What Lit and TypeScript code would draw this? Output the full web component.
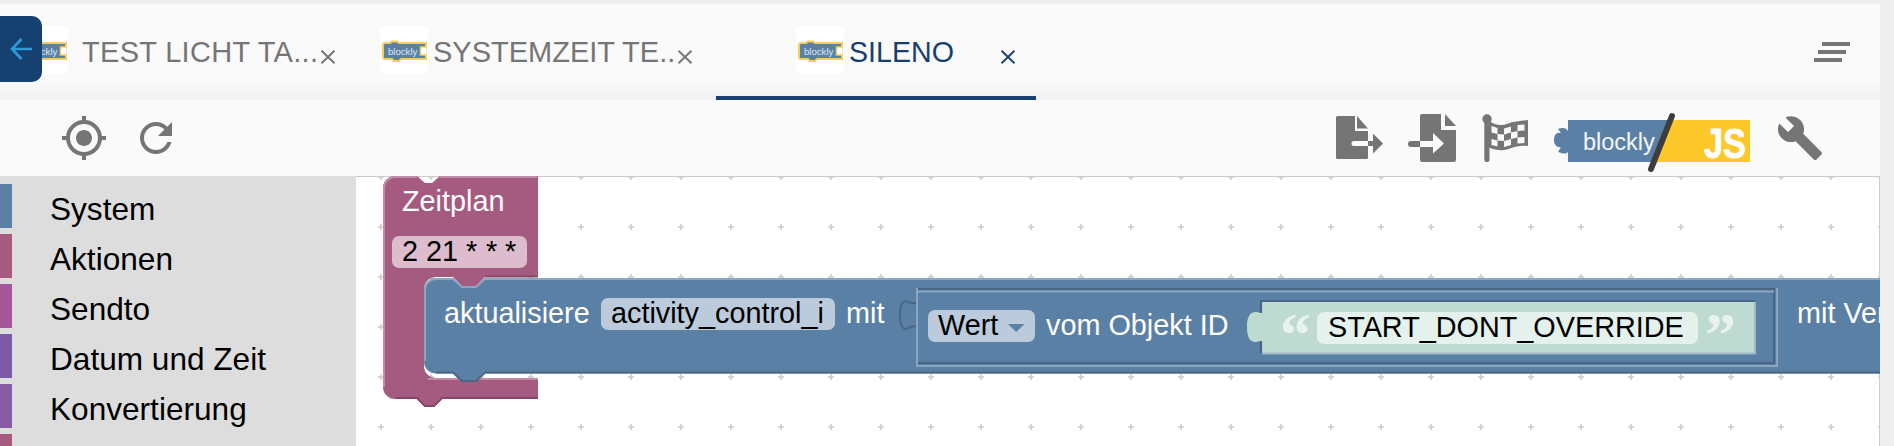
import { LitElement, html, css, svg } from "lit";
import { customElement } from "lit/decorators.js";

const miniLogo = () => svg`<svg class="mini" viewBox="0 0 48 48" width="48" height="48">
  <path d="M5 17 H10 L12 15.5 H17 L19 17 H46 V33 H21 L19 35 H14 L12 33 H5 Q3 33 3 31 V19 Q3 17 5 17 Z" fill="#5b80a5" stroke="#f5cd5e" stroke-width="2"/>
  <path d="M46.5 21 H40.5 V29 H46.5" fill="#fff" stroke="#f5cd5e" stroke-width="1.5"/>
  <text x="8" y="28.5" font-family="Liberation Sans" font-size="9.6" fill="#dfe7ef">blockly</text>
</svg>`;

const closeIcon = () => svg`<svg class="x" viewBox="0 0 16 14" width="16" height="14"><path d="M1.5 .8 L14.5 13.2 M14.5 .8 L1.5 13.2" fill="none" stroke="currentColor" stroke-width="1.9"/></svg>`;

@customElement("app-root")
export class AppRoot extends LitElement {
  static styles = css`
    :host { display: block; width: 1894px; height: 446px; overflow: hidden; background: #eeeeee; font-family: "Liberation Sans", Arial, sans-serif; }
    .frame { padding: 4px 14px 0 0; position: relative; height: 442px; }
    .tabs { display: flex; height: 96px; background: linear-gradient(#fafafa 78%, #f1f1f1); position: relative; }
    .back { position: absolute; left: 0; top: 12px; width: 42px; height: 66px; background: #15406f; border-radius: 0 10px 10px 0; z-index: 2; display: flex; align-items: center; justify-content: center; }
    .tab { display: flex; align-items: flex-start; box-sizing: border-box; height: 96px; color: #757575; font-size: 29px; }
    .t1 { width: 360px; padding-left: 20px; }
    .t2 { width: 356px; padding-left: 20px; }
    .t3 { width: 320px; padding-left: 80px; color: #15406f; border-bottom: 4px solid #15406f; font-size: 28.6px; }
    .box { width: 48px; height: 48px; margin-top: 22px; background: #fff; border-radius: 6px; flex: none; }
    .mini { display: block; }
    .label { line-height: 40px; margin-top: 28px; margin-left: 5px; white-space: nowrap; }
    .t1 .label { margin-left: 14px; letter-spacing: .3px; }
    .x { margin-top: 46px; margin-left: 2px; flex: none; }
    .t3 .x { margin-left: 46px; }
    .menu { position: absolute; left: 1814px; top: 38px; display: flex; flex-direction: column; gap: 4px; }
    .menu i { display: block; width: 28px; height: 4px; background: #757575; }
    .menu i:nth-child(1) { margin-left: 8px; }
    .menu i:nth-child(2) { margin-left: 4px; }
    .toolbar { display: flex; gap: 24px; height: 76px; box-sizing: border-box; padding: 14px 56px 0 60px; background: #fafafa; }
    .toolbar svg { display: block; flex: none; fill: #757575; }
    .spacer { flex: 1; }
    .main { display: flex; height: 270px; }
    .side { width: 356px; flex: none; background: #dddddd; padding-top: 8px; box-sizing: border-box; overflow: hidden; }
    .row { display: flex; height: 44px; margin-bottom: 6px; align-items: center; font-size: 31.6px; color: #000; }
    .row i { display: block; width: 12px; height: 44px; margin-right: 39px; flex: none; }
    .row span { position: relative; top: 3px; left: -1px; }
    .canvas { display: block; width: 1524px; height: 270px; flex: none; background: #fff; }
    .w { fill: #fff; font-size: 28.8px; font-family: "Liberation Sans", Arial, sans-serif; }
    .b { fill: #000; font-size: 28.8px; font-family: "Liberation Sans", Arial, sans-serif; }
    .q { fill: #e8f3ef; font-size: 62px; font-weight: bold; font-family: "Liberation Serif", serif; }
  `;

  private tab(cls: string, label: string) {
    return html`<div class="tab ${cls}"><div class="box">${miniLogo()}</div><div class="label">${label}</div>${closeIcon()}</div>`;
  }

  render() {
    const cats: [string, string][] = [
      ["System", "#5b80a5"], ["Aktionen", "#a55b80"], ["Sendto", "#a5559b"],
      ["Datum und Zeit", "#7d5ba5"], ["Konvertierung", "#8a5ba5"], ["", "#a55b80"],
    ];
    return html`<div class="frame">
      <div class="tabs">
        <div class="back"><svg width="22" height="22" viewBox="0 0 22 22"><path d="M22 11 H2.5 M11.5 1 L2 11 L11.5 21" fill="none" stroke="#2f9bd6" stroke-width="2.6"/></svg></div>
        ${this.tab("t1", "TEST LICHT TA...")}
        ${this.tab("t2", "SYSTEMZEIT TE..")}
        ${this.tab("t3", "SILENO")}
        <div class="menu"><i></i><i></i><i></i></div>
      </div>
      <div class="toolbar">
        <svg width="48" height="48" viewBox="0 0 24 24"><path d="M12 8c-2.21 0-4 1.79-4 4s1.79 4 4 4 4-1.79 4-4-1.79-4-4-4zm8.94 3c-.46-4.17-3.77-7.48-7.94-7.94V1h-2v2.06C6.83 3.52 3.52 6.83 3.06 11H1v2h2.06c.46 4.17 3.77 7.48 7.94 7.94V23h2v-2.06c4.17-.46 7.48-3.77 7.94-7.94H23v-2h-2.06zM12 19c-3.87 0-7-3.13-7-7s3.13-7 7-7 7 3.13 7 7-3.13 7-7 7z"/></svg>
        <svg width="48" height="48" viewBox="0 0 24 24"><path d="M17.65 6.35C16.2 4.9 14.21 4 12 4c-4.42 0-7.99 3.58-7.99 8s3.57 8 7.99 8c3.73 0 6.84-2.55 7.73-6h-2.08c-.82 2.33-3.04 4-5.65 4-3.31 0-6-2.69-6-6s2.69-6 6-6c1.66 0 3.14.69 4.22 1.78L13 11h7V4l-2.35 2.35z"/></svg>
        <div class="spacer"></div>
        <svg width="48" height="48" viewBox="0 0 48 48">
          <path d="M1.5 2 H19 V17 H32 V27 H18 a2.5 2.5 0 0 0 0 5 H32 V43.5 a1.5 1.5 0 0 1 -1.5 1.5 H1.5 A1.5 1.5 0 0 1 0 43.5 V3.5 A1.5 1.5 0 0 1 1.5 2 Z"/>
          <path d="M21 2 L32 14.5 H21 Z"/>
          <path d="M32 27 H37 V19.5 L47 29.5 L37 39.5 V32 H32 Z"/>
        </svg>
        <svg width="48" height="48" viewBox="0 0 48 48">
          <path d="M14 0 H33 V16 H48 V45.5 A2.5 2.5 0 0 1 45.5 48 H14.5 A2.5 2.5 0 0 1 12 45.5 V33 H25 V39.5 L36 29.5 L25 19 V27 H12 V2 A2 2 0 0 1 14 0 Z"/>
          <path d="M37 0 L48 12 H37 Z"/>
          <path d="M12 27 H3 a3 3 0 0 0 0 6 H12 Z"/>
        </svg>
        <svg width="48" height="48" viewBox="0 0 48 48">
          <circle cx="7" cy="5" r="4.7"/>
          <rect x="4.3" y="5" width="5.2" height="43" rx="2.2"/>
          <path d="M9 7 C15 11 21 12 27 10 C34 7 41 7 48 6 V32 C41 31 34 33 27 35.5 C21 37 15 36 9 33.5 Z"/>
          <g fill="#fafafa">
            <path d="M11.5 12 L17.5 14 V20 L11.5 18.5 Z"/><path d="M24 14.5 L31 12.5 V18.5 L24 20.5 Z"/><path d="M37.5 11 L44.5 10.5 V16.5 L37.5 17 Z"/>
            <path d="M17.5 20 L24 20.5 V27 L17.5 26.5 Z"/><path d="M31 18.5 L37.5 17 V23.5 L31 25 Z"/>
            <path d="M11.5 25 L17.5 26.5 V32.5 L11.5 31 Z"/><path d="M24 27 L31 25 V31 L24 33 Z"/><path d="M37.5 23.5 L44.5 23 V29 L37.5 29.5 Z"/>
          </g>
        </svg>
        <svg width="200" height="62" viewBox="1552 110 200 62" style="overflow:visible">
          <path d="M1568 116 H1671 L1652 158 H1568 V148 C1565 151 1562 149 1558 148 L1561 143 C1558 144 1554 141 1554 137 C1554 131 1556 128 1561 129 L1558 125 C1562 124 1565 123 1568 127 Z" fill="#5b80a5"/>
          <path d="M1671 116 H1750 V158 H1652 Z" fill="#fdc829"/>
          <text x="1583" y="146" font-family="Liberation Sans" font-size="23.5" fill="#f2f6fa">blockly</text>
          <text x="1704" y="154" font-family="Liberation Sans" font-weight="bold" font-size="42" fill="#fff" stroke="#fff" stroke-width=".8" textLength="42" lengthAdjust="spacingAndGlyphs">JS</text>
          <path d="M1672 112 L1651 165" stroke="#3d3d3d" stroke-width="6" stroke-linecap="round" fill="none"/>
        </svg>
        <svg width="48" height="48" viewBox="0 0 24 24"><path d="M22.7 19l-9.1-9.1c.9-2.3.4-5-1.5-6.9-2-2-5-2.4-7.4-1.3L9 6 6 9 1.6 4.7C.4 7.1.9 10.1 2.9 12.1c1.9 1.9 4.6 2.4 6.9 1.5l9.1 9.1c.4.4 1 .4 1.4 0l2.3-2.3c.5-.4.5-1.1.1-1.4z"/></svg>
      </div>
      <div class="main">
        <div class="side">
          ${cats.map(([n, c]) => html`<div class="row"><i style="background:${c}"></i><span>${n}</span></div>`)}
        </div>
        <svg class="canvas" viewBox="356 176 1524 270" width="1524" height="270">
          <defs>
            <pattern id="grid" patternUnits="userSpaceOnUse" x="356" y="152" width="50" height="50">
              <path d="M22 25 H28 M25 22 V28" stroke="#cccccc" stroke-width="1.6" fill="none"/>
            </pattern>
          </defs>
          <rect x="356" y="176" width="1524" height="270" fill="url(#grid)"/>
          <path d="M356 176.5 H1880 M1879.5 176 V446" stroke="#cccccc" stroke-width="1" fill="none"/>

          <path d="M383 188 A12 12 0 0 1 395 176 H417 L425 183 H432 L440 176 H538 V277 H485 L476 286 H462 L453 277 H436 A12 12 0 0 0 424 289 V366 A12 12 0 0 0 436 378 H538 V399 H442 L434 407 H425 L417 399 H395 A12 12 0 0 1 383 387 Z" fill="#a55b80"/>
          <path d="M384 387 V188 A11 11 0 0 1 395 177 H417 M440 177 H537 M428 379 H538" stroke="#c08ca8" stroke-width="2" fill="none"/>
          <path d="M396 398 H417 L425 406 H434 L442 398 H538 M485 276.5 H538" stroke="#844866" stroke-width="2" fill="none"/>
          <text class="w" x="402" y="211">Zeitplan</text>
          <rect x="392" y="236" width="135" height="32" rx="7" fill="#dcbccd"/>
          <text class="b" x="402" y="261">2 21<tspan x="466">*</tspan><tspan x="486">*</tspan><tspan x="505">*</tspan></text>

          <path d="M424 290 A12 12 0 0 1 436 278 H453 L462 286 H476 L485 278 H1880 V373.5 H485 L476 382 H462 L453 373.5 H436 A12 12 0 0 1 424 361.5 Z" fill="#5b80a5"/>
          <path d="M425 361 V290 A11 11 0 0 1 436 279 H453 L462 287 H476 L485 279 H1880" stroke="#8ca6c0" stroke-width="2" fill="none"/>
          <path d="M436 372.5 H453 L462 381 H476 L485 372.5 H1880" stroke="#496684" stroke-width="2" fill="none"/>
          <text class="w" x="444" y="323">aktualisiere</text>
          <rect x="601" y="298" width="234" height="32" rx="7" fill="#bccbdb"/>
          <text class="b" x="611" y="323">activity_control_i</text>
          <text class="w" x="846" y="323">mit</text>
          <path d="M917 302 C912 306 910 301 905 301 C901 302 900 309 900 315 C900 321 901 328 905 329 C910 329 912 324 917 327" stroke="#496684" stroke-width="2" fill="none"/>

          <path d="M917 289 H1775 M1774 289 V363 M917 363 H1774" stroke="#496684" stroke-width="2" fill="none"/>
          <path d="M917 288 V366 H1777 V288 M918 291.5 H1774" stroke="#8ca6c0" stroke-width="2" fill="none"/>
          <rect x="928" y="310" width="107" height="32" rx="7" fill="#bccbdb"/>
          <text class="b" x="938" y="334.5">Wert</text>
          <path d="M1008 324 H1024.5 L1016.2 332 Z" fill="#5b80a5"/>
          <text class="w" x="1046" y="334.5">vom Objekt ID</text>

          <path d="M1262 302 H1754 V353 H1262 V341 L1256 342 C1248 342 1247 334 1247 327 C1247 320 1248 312 1256 312 L1262 313 Z" fill="#bfdbd1"/>
          <path d="M1260 301 H1755 M1261 301 V313 M1261 341 V353" stroke="#496684" stroke-width="2.2" fill="none"/>
          <path d="M1262 353.5 H1755 V302" stroke="#9fb7c8" stroke-width="2" fill="none"/>
          <text class="q" x="1280" y="355">“</text>
          <rect x="1317" y="312" width="381" height="32" rx="7" fill="#e4f1ec"/>
          <text class="b" x="1328" y="336.5">START_DONT_OVERRIDE</text>
          <text class="q" x="1705" y="355">”</text>
          <text class="w" x="1797" y="323">mit Ver</text>
        </svg>
      </div>
    </div>`;
  }
}
